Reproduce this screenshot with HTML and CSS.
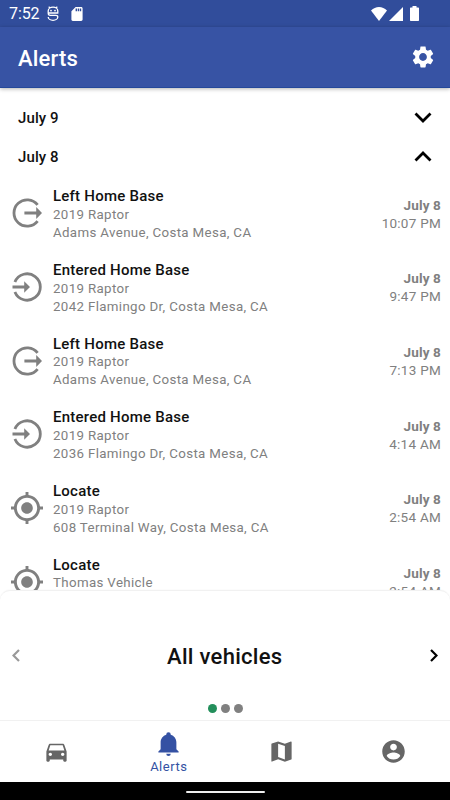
FILE: index.html
```html
<!DOCTYPE html>
<html lang="en">
<head>
<meta charset="utf-8">
<title>Alerts</title>
<link rel="stylesheet" href="styles.css">
</head>
<body>
<svg class="defs" aria-hidden="true">
  <symbol id="left" viewBox="0 0 32 32"><path d="M26.600 7.900A13.200 13.200 0 1 0 26.600 24.100" fill="none" stroke="currentColor" stroke-width="2.800"/><path d="M13.400 14.400H25.200V10L31 16L25.200 22V17.600H13.400Z" fill="currentColor"/></symbol>
  <symbol id="entered" viewBox="0 0 32 32"><path d="M3.900 11A13.200 13.200 0 1 1 3.900 21" fill="none" stroke="currentColor" stroke-width="2.800"/><path d="M1.500 14.500H13.200V10.300L19 16L13.200 21.700V17.500H1.500Z" fill="currentColor"/></symbol>
  <symbol id="locate" viewBox="1 1 22 22"><path fill="currentColor" d="M12 8c-2.21 0-4 1.79-4 4s1.790 4 4 4 4-1.790 4-4-1.790-4-4-4zm8.940 3c-.46-4.170-3.770-7.480-7.940-7.940V1h-2v2.060C6.830 3.520 3.520 6.830 3.060 11H1v2h2.060c.46 4.170 3.770 7.480 7.940 7.940V23h2v-2.060c4.170-.46 7.480-3.770 7.940-7.940H23v-2h-2.060zM12 19c-3.870 0-7-3.130-7-7s3.130-7 7-7 7 3.130 7 7-3.130 7-7 7z"/></symbol>
</svg>
<div class="screen">
  <div class="status">
    <span class="clock">7:52</span>
    <svg class="droid" viewBox="0 0 12 15"><path d="M1.200 6.500V5A4.800 3.900 0 0 1 10.800 5V6.500M3 2.500L1.800.7M9 2.500L10.200.7M.6 7H11.400M1.200 7Q1.200 9.300 3.200 9.300H8.800Q10.800 9.300 10.800 11A4.800 3.300 0 0 1 1.200 11" fill="none" stroke="#fff" stroke-width="1.300"/><circle cx="4" cy="4.600" r=".9" fill="#fff"/><circle cx="8" cy="4.600" r=".9" fill="#fff"/></svg>
    <svg class="sd" viewBox="4 2 16 20"><path fill="#fff" d="M18 2h-8L4.020 8 4 20c0 1.100.9 2 2 2h12c1.100 0 2-.9 2-2V4c0-1.100-.9-2-2-2zm-6 6h-2V4h2v4zm3 0h-2V4h2v4zm3 0h-2V4h2v4z"/></svg>
    <span class="fill"></span>
    <svg class="wifi" viewBox="0 0 16 14"><path fill="#fff" d="M8 14L0 3.500Q3.500 0 8 0T16 3.500Z"/></svg>
    <svg class="cell" viewBox="0 0 14 14"><path fill="#fff" d="M0 14L14 0V14Z"/></svg>
    <svg class="battery" viewBox="0 0 9 15"><path fill="#fff" d="M2.500 0H6.500V1.500H8.300Q9 1.500 9 2.200V14.300Q9 15 8.300 15H.7Q0 15 0 14.300V2.200Q0 1.500 .7 1.500H2.500Z"/></svg>
  </div>
  <header class="bar">
    <h1>Alerts</h1>
    <svg class="gear" viewBox="0 0 24 24"><path fill="#fff" d="M19.140 12.940c.04-.3.06-.61.06-.94 0-.32-.02-.64-.07-.94l2.030-1.580c.18-.14.23-.41.12-.61l-1.920-3.320c-.12-.22-.37-.29-.59-.22l-2.390.96c-.5-.38-1.030-.7-1.620-.94l-.36-2.540c-.04-.24-.24-.41-.48-.41h-3.840c-.24 0-.43.17-.47.41l-.36 2.540c-.59.24-1.130.57-1.620.94l-2.390-.96c-.22-.08-.47 0-.59.22L2.740 8.870c-.12.21-.08.47.12.61l2.030 1.580c-.05.3-.09.63-.09.94s.02.64.07.94l-2.030 1.580c-.18.14-.23.41-.12.61l1.920 3.320c.12.22.37.29.59.22l2.390-.96c.5.38 1.030.7 1.620.94l.36 2.540c.05.24.24.41.48.41h3.840c.24 0 .44-.17.47-.41l.36-2.540c.59-.24 1.130-.56 1.620-.94l2.390.96c.22.08.47 0 .59-.22l1.920-3.320c.12-.22.07-.47-.12-.61l-2.010-1.580zM12 15.600c-1.980 0-3.600-1.620-3.600-3.600s1.620-3.600 3.600-3.600 3.600 1.620 3.600 3.600-1.620 3.600-3.600 3.600z"/></svg>
  </header>
  <main class="alerts">
    <div class="day"><span>July 9</span><svg class="chev" viewBox="0 0 18 11"><path d="M1.500 1.500L9 9L16.500 1.500"/></svg></div>
    <div class="day"><span>July 8</span><svg class="chev" viewBox="0 0 18 11"><path d="M1.500 9.500L9 2L16.500 9.500"/></svg></div>
    <article class="alert"><svg class="mark"><use href="#left"/></svg><div class="info"><h2>Left Home Base</h2><p>2019 Raptor</p><p>Adams Avenue, Costa Mesa, CA</p></div><div class="when"><b>July 8</b><span>10:07 PM</span></div></article>
    <article class="alert"><svg class="mark"><use href="#entered"/></svg><div class="info"><h2>Entered Home Base</h2><p>2019 Raptor</p><p>2042 Flamingo Dr, Costa Mesa, CA</p></div><div class="when"><b>July 8</b><span>9:47 PM</span></div></article>
    <article class="alert"><svg class="mark"><use href="#left"/></svg><div class="info"><h2>Left Home Base</h2><p>2019 Raptor</p><p>Adams Avenue, Costa Mesa, CA</p></div><div class="when"><b>July 8</b><span>7:13 PM</span></div></article>
    <article class="alert"><svg class="mark"><use href="#entered"/></svg><div class="info"><h2>Entered Home Base</h2><p>2019 Raptor</p><p>2036 Flamingo Dr, Costa Mesa, CA</p></div><div class="when"><b>July 8</b><span>4:14 AM</span></div></article>
    <article class="alert"><svg class="mark"><use href="#locate"/></svg><div class="info"><h2>Locate</h2><p>2019 Raptor</p><p>608 Terminal Way, Costa Mesa, CA</p></div><div class="when"><b>July 8</b><span>2:54 AM</span></div></article>
    <article class="alert"><svg class="mark"><use href="#locate"/></svg><div class="info"><h2>Locate</h2><p>Thomas Vehicle</p></div><div class="when"><b>July 8</b><span>2:54 AM</span></div></article>
  </main>
  <section class="sheet">
    <div class="picker">
      <svg class="arrow prev" viewBox="0 0 8 13"><path d="M7 1L1.500 6.500L7 12"/></svg>
      <span class="name">All vehicles</span>
      <svg class="arrow" viewBox="0 0 8 13"><path d="M1 1L6.500 6.500L1 12"/></svg>
    </div>
    <div class="dots"><i class="on"></i><i></i><i></i></div>
  </section>
  <nav class="tabs">
    <a><svg viewBox="0 0 24 24"><path d="M18.920 6.010C18.720 5.420 18.160 5 17.500 5h-11c-.66 0-1.210.42-1.420 1.010L3 12v8c0 .55.450 1 1 1h1c.55 0 1-.45 1-1v-1h12v1c0 .55.450 1 1 1h1c.55 0 1-.45 1-1v-8l-2.080-5.990zM6.500 16c-.83 0-1.500-.67-1.500-1.500S5.670 13 6.500 13s1.500.67 1.500 1.500S7.330 16 6.500 16zm11 0c-.83 0-1.500-.67-1.500-1.500s.67-1.500 1.500-1.500 1.500.67 1.500 1.500-.67 1.500-1.500 1.500zM5 11l1.500-4.500h11L19 11H5z"/></svg></a>
    <a class="active"><svg viewBox="0 0 24 24"><path d="M21 19V20H3V19L5 17V11C5 7.900 7.030 5.170 10 4.290V4A2 2 0 0 1 14 4V4.290C16.970 5.170 19 7.900 19 11V17L21 19M14 21A2 2 0 0 1 10 21"/></svg><span>Alerts</span></a>
    <a><svg viewBox="0 0 24 24"><path d="M20.500 3l-.16.030L15 5.100 9 3 3.360 4.900c-.21.070-.36.250-.36.480V20.500c0 .28.220.5.5.5l.16-.03L9 18.900l6 2.100 5.640-1.900c.21-.07.360-.25.360-.48V3.500c0-.28-.22-.5-.5-.5zM15 19l-6-2.110V5l6 2.110V19z"/></svg></a>
    <a><svg viewBox="0 0 24 24"><path d="M12 2C6.480 2 2 6.480 2 12s4.480 10 10 10 10-4.480 10-10S17.520 2 12 2zm0 3c1.660 0 3 1.340 3 3s-1.340 3-3 3-3-1.340-3-3 1.340-3 3-3zm0 14.200c-2.500 0-4.710-1.280-6-3.220.03-1.990 4-3.080 6-3.080 1.990 0 5.970 1.090 6 3.080-1.290 1.940-3.500 3.220-6 3.220z"/></svg></a>
  </nav>
  <div class="home"><i></i></div>
</div>
</body>
</html>
```
FILE: styles.css
```css
* { box-sizing: border-box; }
body { margin: 0; font-family: Roboto, sans-serif; background: #fff; }
h1, h2, p { margin: 0; }
svg { display: block; flex: none; }
.defs { display: none; }
.screen { width: 450px; height: 800px; display: flex; flex-direction: column; overflow: hidden; }
.status { height: 27px; flex: none; background: #314d9b; display: flex; align-items: center; padding: 0 31px 0 9px; color: #fff; }
.clock { font-size: 16px; width: 38px; letter-spacing: -0.1px; }
.droid { width: 12px; height: 15px; }
.sd { width: 12px; height: 14px; margin-left: 12px; }
.fill { flex: 1; }
.wifi { width: 16px; height: 14px; }
.cell { width: 14px; height: 14px; margin-left: 2px; }
.battery { width: 9px; height: 15px; margin-left: 7px; }
.bar { height: 61px; flex: none; background: #3753a4; border-bottom: 1px solid #24489a; box-shadow: 0 1px 4px rgba(0,0,0,.3); display: flex; align-items: center; justify-content: space-between; padding: 0 14px 0 18px; color: #fff; position: relative; }
.bar h1 { font-size: 22px; font-weight: 500; letter-spacing: 0.2px; line-height: 26px; padding-top: 3px; }
.gear { width: 26px; height: 26px; }
.alerts { height: 502px; flex: none; padding-top: 10px; overflow: hidden; color: #808080; }
.day { height: 39px; display: flex; align-items: center; justify-content: space-between; padding: 0 18px; color: #111; font-size: 15px; font-weight: 500; letter-spacing: 0.1px; }
.chev { width: 18px; height: 11px; fill: none; stroke: #000; stroke-width: 2.800; }
.alert { height: 73.700px; display: flex; padding: 10.300px 9px 0 10.500px; }
.mark { width: 32px; height: 32px; margin-top: 11px; }
.info { flex: 1; margin-left: 10.500px; }
.info h2 { font-size: 15px; line-height: 20px; font-weight: 500; letter-spacing: 0.23px; color: #111; }
.info p { font-size: 13.300px; line-height: 18px; letter-spacing: 0.350px; position: relative; top: -0.400px; }
.when { display: flex; flex-direction: column; align-items: flex-end; padding-top: 9.300px; font-size: 13.500px; line-height: 18px; letter-spacing: 0.260px; }
.when b { font-weight: 700; letter-spacing: 0.150px; }
.sheet { height: 131px; flex: none; background: #fff; border-top: 1px solid #f1f1f1; border-radius: 10px 10px 0 0; display: flex; flex-direction: column; align-items: center; box-shadow: 0 0 2px rgba(0,0,0,.06); position: relative; }
.picker { align-self: stretch; margin-top: 49px; height: 30px; padding: 0 12px 0 11.500px; display: flex; align-items: center; justify-content: space-between; }
.name { font-size: 22px; font-weight: 500; letter-spacing: 0.300px; color: #111; padding-top: 3px; }
.arrow { width: 8px; height: 13px; fill: none; stroke: #000; stroke-width: 2.200; }
.prev { stroke: #999; }
.dots { display: flex; gap: 4px; margin-top: 34px; }
.dots i { width: 9px; height: 9px; border-radius: 50%; background: #808080; }
.dots .on { background: #238f5b; }
.tabs { height: 62px; margin-top: -1px; flex: none; border-top: 1px solid #f1f1f1; display: flex; background: #fff; position: relative; }
.tabs a { flex: 1; display: flex; flex-direction: column; align-items: center; padding-top: 17px; color: #666; }
.tabs svg { width: 27px; height: 27px; fill: currentColor; }
.tabs .active { color: #3451a3; padding-top: 9px; }
.tabs span { font-size: 13px; line-height: 16px; letter-spacing: 0.500px; margin-top: 2px; }
.home { flex: 1; background: #000; display: flex; justify-content: center; padding-top: 9px; }
.home i { width: 79px; height: 2px; border-radius: 1px; background: #eee; }
```
